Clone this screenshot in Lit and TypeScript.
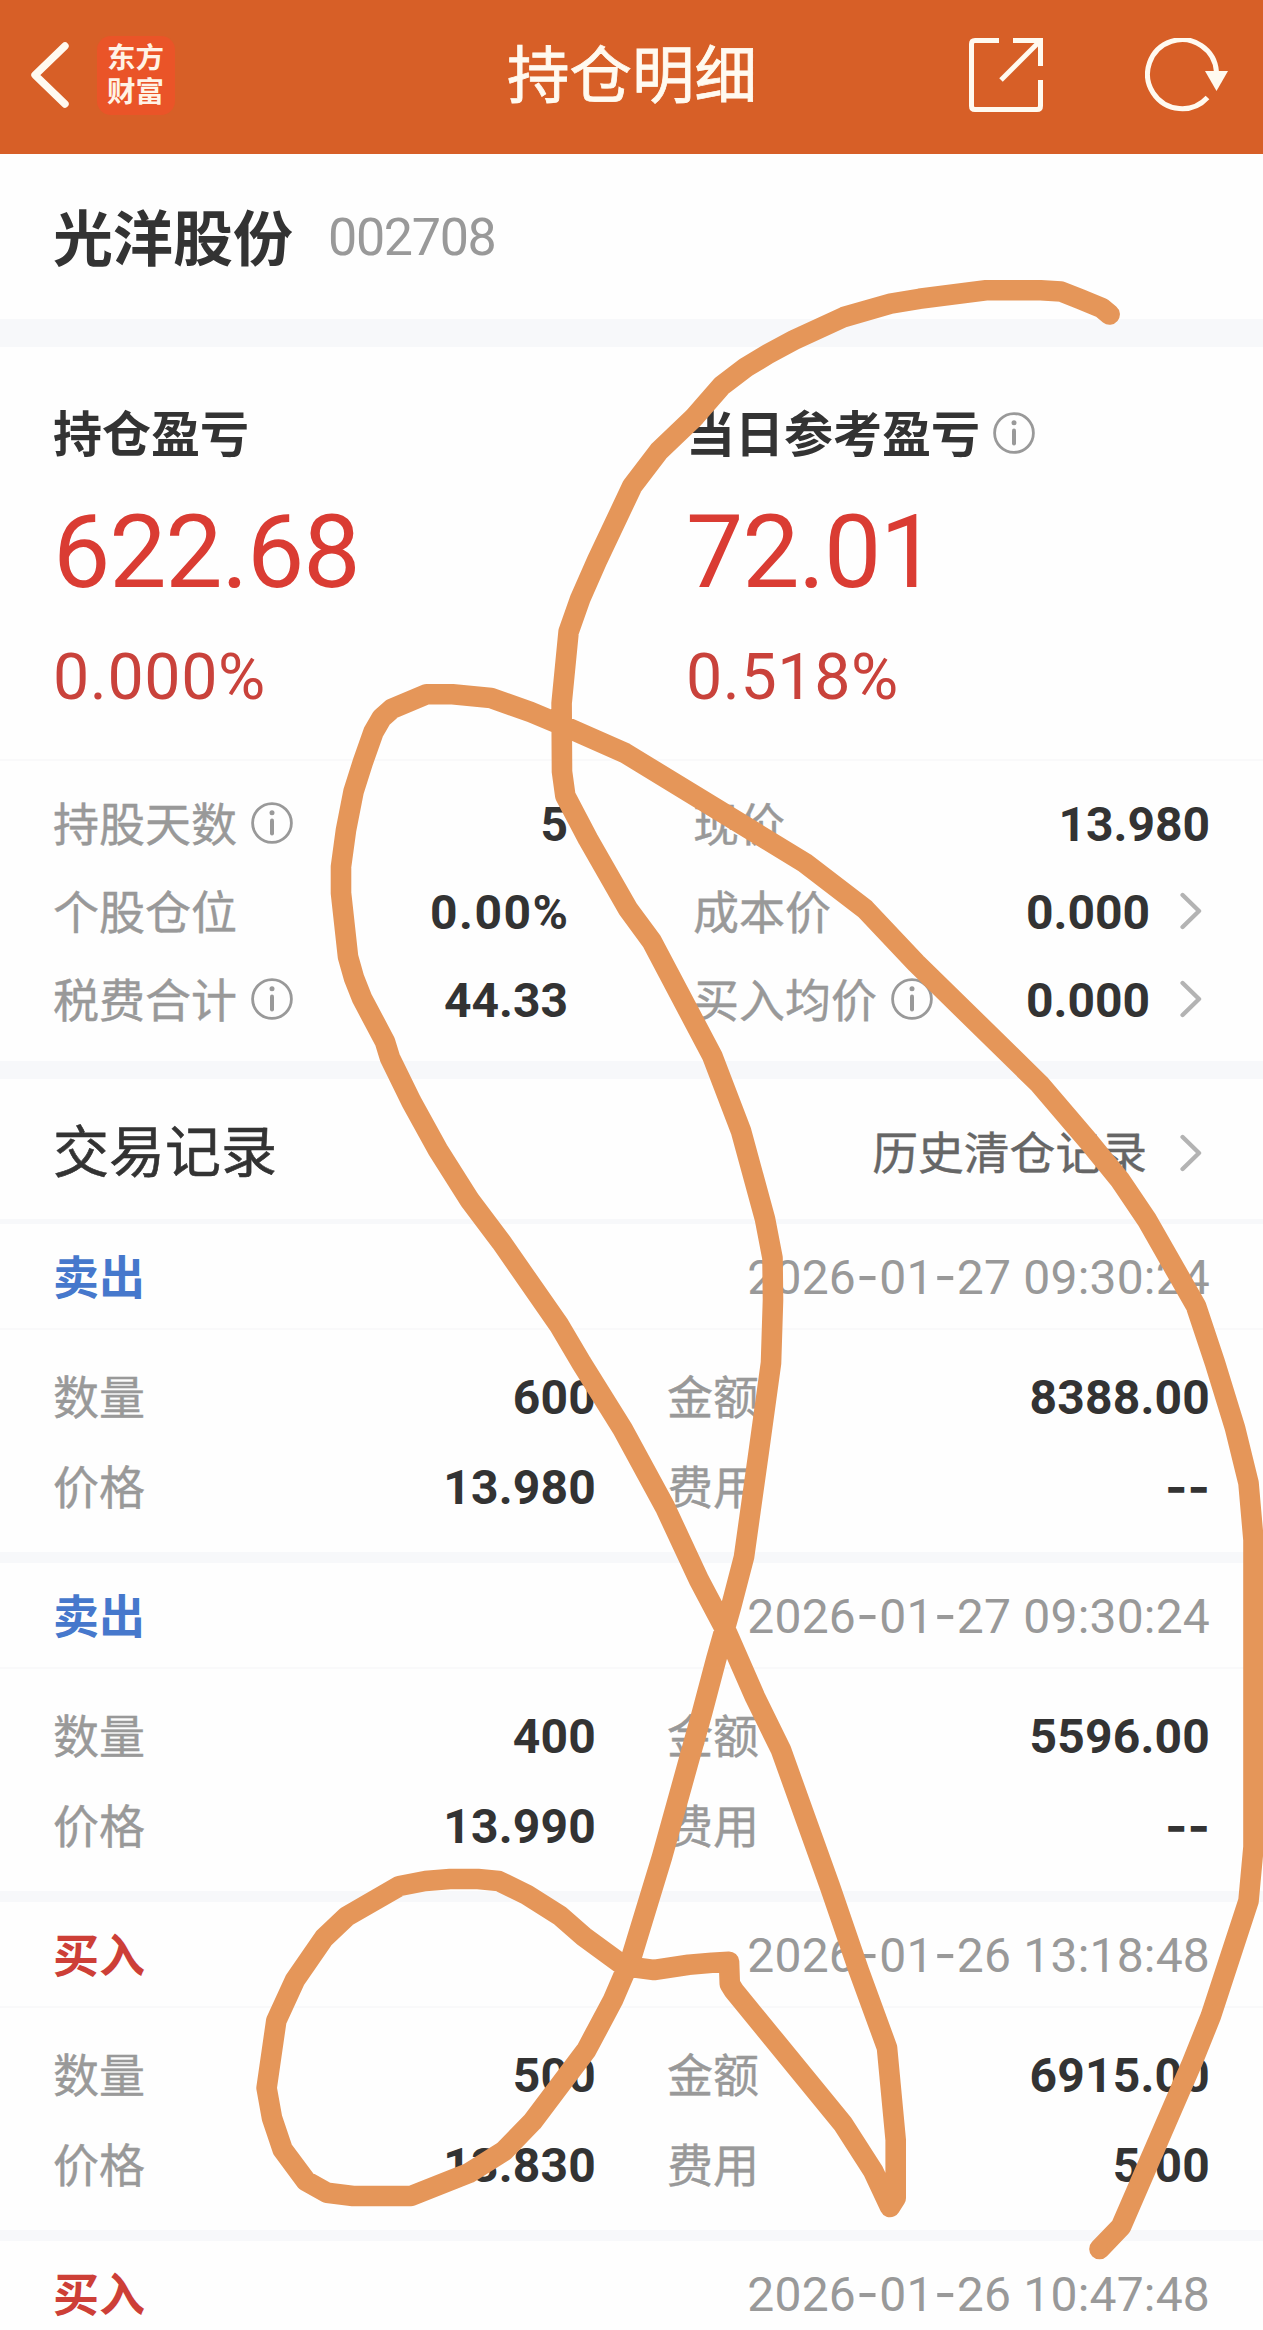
import { LitElement, html, css, svg, nothing } from "lit";
import { customElement, property } from "lit/decorators.js";

type Trade = {
  side: "buy" | "sell";
  time: string;
  qty?: string;
  amount?: string;
  price?: string;
  fee?: string;
};

const TRADES: Trade[] = [
  { side: "sell", time: "2026-01-27 09:30:24", qty: "600", amount: "8388.00", price: "13.980", fee: "--" },
  { side: "sell", time: "2026-01-27 09:30:24", qty: "400", amount: "5596.00", price: "13.990", fee: "--" },
  { side: "buy", time: "2026-01-26 13:18:48", qty: "500", amount: "6915.00", price: "13.830", fee: "5.00" },
  { side: "buy", time: "2026-01-26 10:47:48" },
];

// Freehand pen line drawn over the page
const PEN: number[][] = [
  [1109.6, 314.5], [1101.8, 308], [1080, 299], [1061, 291.5], [1040.7, 290.3], [986, 290.3], [919.4, 298.8],
  [890.6, 303.6], [844, 317], [794, 340], [768, 354], [746, 367.3], [721.7, 385.7], [693.8, 417.7], [659, 451],
  [632.3, 486], [597, 560.7], [580.4, 598.3], [568.6, 631.7], [561.6, 703.3], [562, 771.7], [565.3, 795.7],
  [588, 839], [628, 909], [652, 941.7], [712.3, 1056], [741, 1131], [765, 1219], [772.5, 1258], [773, 1300],
  [771, 1363], [759, 1450], [744, 1557], [731, 1607], [716, 1660], [702, 1713], [662, 1857], [631.5, 1957],
  [613, 2000], [586.4, 2050], [532.4, 2121.7], [504, 2151], [469, 2173], [411, 2196], [353, 2196],
  [327, 2192.7], [306, 2181], [282.7, 2149.7], [272, 2118], [266.6, 2088], [276.3, 2020.7], [295, 1980],
  [324, 1938], [346.4, 1916.7], [399.5, 1886], [425.3, 1881], [450, 1879], [478, 1879], [498.6, 1881],
  [526.8, 1894.7], [560, 1915.7], [584, 1936.7], [624, 1966], [654, 1970], [688.7, 1964.7], [712, 1962.7],
  [729, 1961.7], [729.8, 1984], [734, 1990.7], [771.6, 2036.7], [843, 2124], [873, 2170.7], [890, 2207],
  [895.7, 2198], [895.7, 2140], [887, 2047.7], [858.6, 1970], [830, 1886.7], [805, 1817], [781, 1750],
  [755, 1697], [727, 1633], [699, 1580], [665, 1507], [622.6, 1429], [581.6, 1363.3], [559, 1325],
  [501, 1241.7], [469.6, 1200], [438, 1150], [411.4, 1101.7], [390, 1058], [385, 1041.7], [362, 998.3],
  [354, 978], [348, 956.7], [341, 893], [341, 866.7], [346, 830], [353.5, 791.7], [363, 761.7], [373.5, 732],
  [381.6, 718], [392, 708.7], [426.5, 694.3], [452.5, 694.3], [491, 698], [530.6, 712], [561.6, 725],
  [625, 753], [805, 863], [865, 909], [916, 963], [1039.5, 1084], [1088, 1140.7], [1120, 1180], [1147, 1220],
  [1196, 1306], [1215, 1363], [1235, 1428], [1248.5, 1483], [1253.5, 1540], [1253.5, 1847], [1248.5, 1901],
  [1210.6, 2016.7], [1192, 2063], [1121, 2226.7], [1099.5, 2249],
];

const infoIcon = html`<svg class="info" viewBox="0 0 42 42">
  <circle cx="21" cy="21" r="19.4" fill="none" stroke="#999" stroke-width="2.8" />
  <circle cx="21" cy="10.8" r="2.5" fill="#999" />
  <path d="M21 18.5V31.5" stroke="#999" stroke-width="4" stroke-linecap="round" />
</svg>`;

const chevron = html`<svg class="chev" viewBox="0 0 22 38">
  <path d="M2.6 3L19 19L2.6 35" fill="none" stroke="#b3b3b3" stroke-width="4.4" stroke-linecap="round" stroke-linejoin="round" />
</svg>`;

const dashed = (s: string) =>
  s.split(/(-)/).filter((p) => p).map((p) => (p === "-" ? html`<span class="dash">-</span>` : p));

const shared = css`
  :host { display: block; }
  .cjk { font-family: "Noto Sans CJK SC", sans-serif; white-space: nowrap; line-height: 1; margin-bottom: 5px; }
  .num { font-family: Roboto, "Liberation Sans", sans-serif; white-space: nowrap; line-height: 1; }
  .label { font-size: 46px; color: #999; -webkit-text-stroke: 0.4px #999; }
  .val { font-size: 48px; font-weight: 700; color: #333; margin-top: 3px; }
  .dash { font-family: Inter, sans-serif; }
  .grow { flex: 1; }
  svg { display: block; flex: none; }
`;

@customElement("trade-record")
export class TradeRecord extends LitElement {
  @property({ attribute: false }) trade!: Trade;

  static styles = [
    shared,
    css`
      .head { height: 104px; display: flex; align-items: center; padding: 0 53px; border-bottom: 2px solid #f9f9fa; }
      .side { font-size: 46px; font-weight: 700; }
      .sell { color: #4678cc; }
      .buy { color: #cd3f37; }
      .time { font-size: 48px; color: #999; letter-spacing: 0.2px; margin-top: 4px; }
      .time .dash { font-size: 50px; letter-spacing: 0.2px; line-height: 0; }
      .body { height: 222px; padding-top: 21px; box-sizing: border-box; }
      .row { height: 90px; display: flex; align-items: center; padding: 0 53px; }
      .left { width: 543px; display: flex; align-items: center; }
      .right { flex: 1; display: flex; align-items: center; padding-left: 71px; }
      .val { letter-spacing: 0.2px; }
      .val .dash { font-size: 48px; line-height: 0; letter-spacing: 0; }
      .gap { height: 11px; background: #f7f8fa; }
    `,
  ];

  private row(a: string, av: string, b: string, bv: string) {
    return html`<div class="row">
      <div class="left"><span class="cjk label">${a}</span><span class="grow"></span><span class="num val">${av}</span></div>
      <div class="right"><span class="cjk label">${b}</span><span class="grow"></span><span class="num val">${dashed(bv)}</span></div>
    </div>`;
  }

  render() {
    const t = this.trade;
    return html`
      <div class="head">
        <span class="cjk side ${t.side}">${t.side === "sell" ? "卖出" : "买入"}</span>
        <span class="grow"></span>
        <span class="num time">${dashed(t.time)}</span>
      </div>
      ${t.qty
        ? html`<div class="body">
              ${this.row("数量", t.qty, "金额", t.amount!)} ${this.row("价格", t.price!, "费用", t.fee!)}
            </div>
            <div class="gap"></div>`
        : nothing}
    `;
  }
}

@customElement("app-root")
export class AppRoot extends LitElement {
  static styles = [
    shared,
    css`
      :host { position: relative; width: 1263px; height: 2330px; overflow: hidden; background: #fefefe; }
      .bar { height: 154px; background: #d75f27; display: grid; grid-template-columns: 1fr auto 1fr; align-items: center; padding: 0 32px 4px 30px; box-sizing: border-box; }
      .start { display: flex; align-items: center; gap: 28px; }
      .end { display: flex; align-items: center; justify-content: flex-end; gap: 102px; }
      .title { font-size: 62.5px; color: #fffaf0; margin: 0 0 7px 3px; -webkit-text-stroke: 0.8px #fffaf0; }
      .logo { width: 78px; height: 79px; border-radius: 14px; background: #ea5428; padding: 3px 10px 0; box-sizing: border-box; font-family: "Noto Sans CJK SC", sans-serif; font-weight: 700; font-size: 28.5px; line-height: 34px; color: #fff3e6; word-break: break-all; }
      .stock { height: 165px; display: flex; align-items: center; padding-left: 53px; box-sizing: border-box; }
      .name { font-size: 60px; font-weight: 700; color: #333; margin-bottom: 4px; }
      .code { font-size: 52px; color: #999; letter-spacing: -1.3px; margin: 2px 0 0 35px; }
      .band { background: #f7f8fa; }
      .b1 { height: 28px; }
      .b2 { height: 18px; }
      .b3 { height: 5px; }
      .pl { height: 414px; display: grid; grid-template-columns: 633px 1fr; padding: 56px 0 0 53px; box-sizing: border-box; border-bottom: 2px solid #f9f9fa; }
      .ptitle { height: 60px; display: flex; align-items: center; gap: 13px; font-size: 49px; font-weight: 700; color: #333; }
      .big { font-size: 102px; color: #da3c33; letter-spacing: -1.2px; height: 104px; line-height: 104px; margin-top: 37px; }
      .pct { font-size: 64.5px; color: #c9423b; letter-spacing: 0.6px; height: 66px; line-height: 66px; margin-top: 40px; }
      .stats { height: 300px; display: grid; grid-template-columns: 515px 517px; column-gap: 125px; grid-auto-rows: 88px; padding: 18px 53px 0 53px; box-sizing: border-box; }
      .stat { display: flex; align-items: center; }
      .stat .info { margin-left: 14px; }
      .stat .chev { margin: 0 8px 0 30px; }
      .wide { letter-spacing: 1.5px; margin-right: -1.5px; }
      .info { width: 42px; height: 42px; }
      .chev { width: 22px; height: 38px; }
      .records { height: 140px; display: flex; align-items: center; padding: 0 54px 0 53px; }
      .rtitle { font-size: 56px; color: #333; margin-bottom: 3px; -webkit-text-stroke: 0.6px #333; }
      .history { font-size: 45.8px; color: #666; margin: 4px 0 0; -webkit-text-stroke: 0.4px #666; }
      .records .chev { margin: 8px 7px 0 33px; }
      .pen { position: absolute; left: 0; top: 0; pointer-events: none; }
    `,
  ];

  private stat(label: string, value: string, info = false, more = false) {
    return html`<div class="stat">
      <span class="cjk label">${label}</span>${info ? infoIcon : nothing}<span class="grow"></span>
      <span class="num val ${value.endsWith("%") ? "wide" : ""}">${value}</span>${more ? chevron : nothing}
    </div>`;
  }

  render() {
    return html`
      <header class="bar">
        <div class="start">
          <svg width="39" height="66" viewBox="0 0 39 66">
            <path d="M35 4L5 33L35 62" fill="none" stroke="#fffaf0" stroke-width="7.4" stroke-linecap="round" stroke-linejoin="round" />
          </svg>
          <div class="logo">东方财富</div>
        </div>
        <span class="cjk title">持仓明细</span>
        <div class="end">
          <svg width="74" height="74" viewBox="0 0 74 74" fill="none" stroke="#fffaf0" stroke-width="5">
            <path d="M30 2.5H6Q2.5 2.5 2.5 6V68Q2.5 71.5 6 71.5H68Q71.5 71.5 71.5 68V42" />
            <path d="M44 2.5H71.5V28" />
            <path d="M32 42L70 4" />
          </svg>
          <svg width="86" height="74" viewBox="0 0 86 74">
            <path d="M71.5 34A34.5 34.5 0 1 0 62.5 59.5" fill="none" stroke="#fffaf0" stroke-width="5" />
            <path d="M60 33H83L71.5 53Z" fill="#fffaf0" />
          </svg>
        </div>
      </header>
      <section class="stock">
        <span class="cjk name">光洋股份</span><span class="num code">002708</span>
      </section>
      <div class="band b1"></div>
      <section class="pl">
        <div>
          <div class="ptitle"><span class="cjk">持仓盈亏</span></div>
          <div class="num big">622.68</div>
          <div class="num pct">0.000%</div>
        </div>
        <div>
          <div class="ptitle"><span class="cjk">当日参考盈亏</span>${infoIcon}</div>
          <div class="num big">72.01</div>
          <div class="num pct">0.518%</div>
        </div>
      </section>
      <section class="stats">
        ${this.stat("持股天数", "5", true)} ${this.stat("现价", "13.980")}
        ${this.stat("个股仓位", "0.00%")} ${this.stat("成本价", "0.000", false, true)}
        ${this.stat("税费合计", "44.33", true)} ${this.stat("买入均价", "0.000", true, true)}
      </section>
      <div class="band b2"></div>
      <section class="records">
        <span class="cjk rtitle">交易记录</span><span class="grow"></span>
        <span class="cjk history">历史清仓记录</span>${chevron}
      </section>
      <div class="band b3"></div>
      ${TRADES.map((t) => html`<trade-record .trade=${t}></trade-record>`)}
      <svg class="pen" width="1263" height="2330" viewBox="0 0 1263 2330">
        ${svg`<polyline points=${PEN.map((p) => p.join(",")).join(" ")} fill="none" stroke="#e59659" stroke-width="20.6" stroke-linecap="round" stroke-linejoin="round" />`}
      </svg>
    `;
  }
}
